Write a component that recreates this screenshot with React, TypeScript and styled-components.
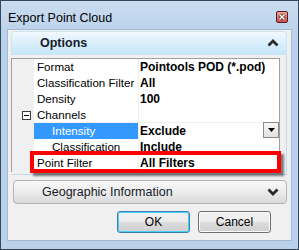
import styled, { createGlobalStyle } from "styled-components";

const GlobalStyle = createGlobalStyle`
  html, body {
    margin: 0;
    padding: 0;
    background: #ffffff;
  }
  body {
    font-family: "Liberation Sans", Arial, sans-serif;
    font-size: 12px;
    color: #000000;
  }
`;

const Window = styled.div`
  width: 299px;
  height: 250px;
  box-sizing: border-box;
  border: 1px solid #34475b;
  background: linear-gradient(#c9dcf0, #b9d1ea 40px, #b9d1ea);
  padding: 0 6px 8px 6px;
  display: flex;
  flex-direction: column;
`;

const TitleBar = styled.div`
  height: 28px;
  display: flex;
  align-items: center;
  justify-content: space-between;
  padding: 0 4px 0 1px;
`;

const Title = styled.span`
  font-size: 12.5px;
  color: #000000;
  margin-top: 6px;
`;

const CloseButton = styled.div`
  width: 10px;
  height: 10px;
  border: 1px solid #5e1d1d;
  border-radius: 2px;
  background: linear-gradient(#e7a39c, #c9524a);
  display: flex;
  align-items: center;
  justify-content: center;
  margin-top: 4px;
`;

const Client = styled.div`
  flex: 1;
  background: #f0f0f0;
  border: 1px solid #a5bad2;
  padding: 1px 4px 7px 3px;
  display: flex;
  flex-direction: column;
`;

const Panel = styled.div`
  display: flex;
  flex-direction: column;
`;

const PanelHeader = styled.div<{ $open: boolean }>`
  height: 24px;
  box-sizing: border-box;
  display: flex;
  align-items: center;
  justify-content: space-between;
  padding: 0 7px 0 28px;
  border: 1px solid ${(p) => (p.$open ? "#cde3f3" : "#b4b4b4")};
  border-radius: ${(p) => (p.$open ? "4px 4px 0 0" : "4px")};
  background: ${(p) =>
    p.$open
      ? "linear-gradient(#f2f9fe, #dcf0fc 45%, #c6e6fa)"
      : "linear-gradient(#f8f8f8, #ececec 50%, #d9d9d9)"};
  margin-left: ${(p) => (p.$open ? "0" : "2px")};
`;

const HeaderText = styled.span<{ $bold: boolean }>`
  font-size: 12.5px;
  font-weight: ${(p) => (p.$bold ? 700 : 400)};
  color: #17202a;
`;

const PanelBody = styled.div`
  padding: 3px 6px 2px 0;
  border-right: 1px solid #c8d9ea;
  border-bottom: 1px solid #c8d9ea;
`;

const Grid = styled.div`
  border: 1px solid #a0a0a0;
  background: #f0f0f0;
  display: flex;
  flex-direction: column;
`;

const Row = styled.div`
  position: relative;
  display: grid;
  grid-template-columns: 22px 104px 1px 140px;
  height: 16px;
`;

const Margin = styled.div`
  background: #f0f0f0;
  display: flex;
  align-items: center;
  padding-left: 10px;
`;

const Label = styled.div<{ $indent: boolean; $selected: boolean }>`
  background: ${(p) => (p.$selected ? "#3399ff" : "#ffffff")};
  color: ${(p) => (p.$selected ? "#ffffff" : "#000000")};
  padding-left: ${(p) => (p.$indent ? "18px" : "3px")};
  border-bottom: 1px solid #f0f0f0;
  font-size: 11.6px;
  line-height: 16px;
  white-space: nowrap;
  overflow: hidden;
`;

const Divider = styled.div`
  background: #f0f0f0;
`;

const Value = styled.div`
  background: #ffffff;
  border-bottom: 1px solid #f0f0f0;
  font-weight: 700;
  padding-left: 1px;
  line-height: 16px;
  display: flex;
  justify-content: space-between;
  white-space: nowrap;
`;

const ExpandBox = styled.div`
  width: 7px;
  height: 7px;
  border: 1px solid #3c3c3c;
  background: #ffffff;
  display: flex;
  align-items: center;
  justify-content: center;
  &::after {
    content: "";
    width: 5px;
    height: 1px;
    background: #000000;
  }
`;

const DropButton = styled.div`
  width: 14px;
  height: 14px;
  margin-top: -1px;
  border: 1px solid #8a8a8a;
  background: linear-gradient(#f6f6f6, #e2e2e2);
  display: flex;
  align-items: center;
  justify-content: center;
`;

const Highlight = styled.div`
  position: absolute;
  left: 18px;
  top: -4px;
  width: 251px;
  height: 22px;
  box-sizing: border-box;
  border: 4px solid #ff0000;
  box-shadow: 3px 3px 2px rgba(0, 0, 0, 0.5);
  pointer-events: none;
`;

const Collapsed = styled.div`
  margin-top: 5px;
`;

const ButtonRow = styled.div`
  margin-top: 7px;
  display: flex;
  justify-content: flex-end;
  gap: 8px;
  padding-right: 16px;
`;

const Button = styled.div<{ $focused: boolean }>`
  width: 73px;
  height: 22px;
  box-sizing: border-box;
  border: 1px solid ${(p) => (p.$focused ? "#3c7fb1" : "#707070")};
  border-radius: 3px;
  background: linear-gradient(#f2f2f2, #ebebeb 50%, #dddddd 50%, #cfcfcf);
  box-shadow: ${(p) =>
    p.$focused ? "inset 0 0 0 1px #48d0f6" : "inset 0 0 0 1px #fcfcfc"};
  display: flex;
  align-items: center;
  justify-content: center;
  font-size: 12px;
  color: #000000;
`;

function Chevron({ up }: { up: boolean }) {
  return (
    <svg width="12" height="8" viewBox="0 0 12 8">
      <polyline
        points={up ? "1.5,6.5 6,2 10.5,6.5" : "1.5,1.5 6,6 10.5,1.5"}
        fill="none"
        stroke="#2a2a2a"
        strokeWidth="2.8"
      />
    </svg>
  );
}

const rows = [
  { label: "Format", value: "Pointools POD (*.pod)" },
  { label: "Classification Filter", value: "All" },
  { label: "Density", value: "100" },
  { label: "Channels", value: "", category: true },
  { label: "Intensity", value: "Exclude", indent: true, selected: true },
  { label: "Classification", value: "Include", indent: true },
  { label: "Point Filter", value: "All Filters", marked: true },
];

export default function App() {
  return (
    <>
      <GlobalStyle />
      <Window>
        <TitleBar>
          <Title>Export Point Cloud</Title>
          <CloseButton>
            <svg width="8" height="8" viewBox="0 0 8 8">
              <path d="M1.5 1.5 L6.5 6.5 M6.5 1.5 L1.5 6.5" stroke="#5e1d1d" strokeWidth="3" />
              <path d="M1.5 1.5 L6.5 6.5 M6.5 1.5 L1.5 6.5" stroke="#ffffff" strokeWidth="1.5" />
            </svg>
          </CloseButton>
        </TitleBar>
        <Client>
          <Panel>
            <PanelHeader $open>
              <HeaderText $bold>Options</HeaderText>
              <Chevron up />
            </PanelHeader>
            <PanelBody>
              <Grid>
                {rows.map((r) => (
                  <Row key={r.label}>
                    <Margin>{r.category && <ExpandBox />}</Margin>
                    <Label $indent={!!r.indent} $selected={!!r.selected}>
                      {r.label}
                    </Label>
                    <Divider />
                    <Value>
                      {r.value}
                      {r.selected && (
                        <DropButton>
                          <svg width="7" height="4" viewBox="0 0 7 4">
                            <path d="M0 0 H7 L3.5 4 Z" fill="#000000" />
                          </svg>
                        </DropButton>
                      )}
                    </Value>
                    {r.marked && <Highlight />}
                  </Row>
                ))}
              </Grid>
            </PanelBody>
          </Panel>
          <Collapsed>
            <PanelHeader $open={false}>
              <HeaderText $bold={false}>Geographic Information</HeaderText>
              <Chevron up={false} />
            </PanelHeader>
          </Collapsed>
          <ButtonRow>
            <Button $focused>OK</Button>
            <Button $focused={false}>Cancel</Button>
          </ButtonRow>
        </Client>
      </Window>
    </>
  );
}
